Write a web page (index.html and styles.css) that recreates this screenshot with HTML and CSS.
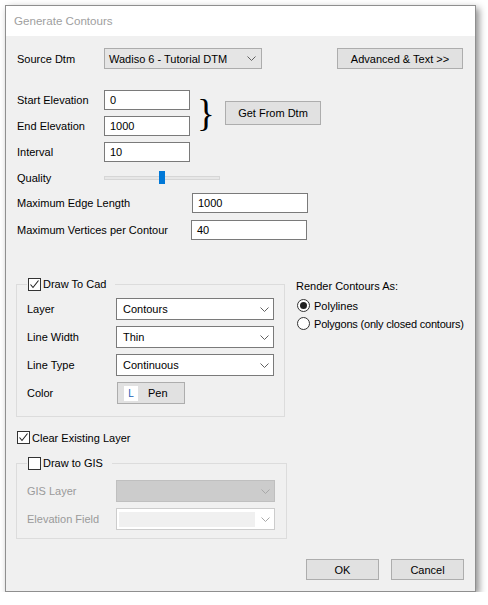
FILE: index.html
```html
<!DOCTYPE html>
<html>
<head>
<meta charset="utf-8">
<link rel="stylesheet" href="styles.css">
</head>
<body>
<div class="window">
  <div class="titlebar">Generate Contours</div>
  <div class="content">
    <div class="row row-source">
      <span class="label w87">Source Dtm</span>
      <div class="combo combo-dd w158"><span class="combo-text">Wadiso 6 - Tutorial DTM</span><svg class="chev" width="9" height="5" viewBox="0 0 9 5"><polyline points="0.5,0.5 4.5,4.5 8.5,0.5" fill="none" stroke="#606060" stroke-width="1"/></svg></div>
      <button class="btn btn-adv">Advanced &amp; Text &gt;&gt;</button>
    </div>

    <div class="elev">
      <div class="elev-fields">
        <div class="row field"><span class="label w87">Start Elevation</span><div class="input w86">0</div></div>
        <div class="row field"><span class="label w87">End Elevation</span><div class="input w86">1000</div></div>
      </div>
      <span class="brace">}</span>
      <button class="btn btn-get">Get From Dtm</button>
    </div>
    <div class="row field gap6"><span class="label w87">Interval</span><div class="input w86">10</div></div>
    <div class="row field gap6"><span class="label w87">Quality</span><div class="slider"><div class="track"></div><div class="thumb"></div></div></div>
    <div class="row field gap5"><span class="label w175">Maximum Edge Length</span><div class="input w116">1000</div></div>
    <div class="row field gap7"><span class="label w174">Maximum Vertices per Contour</span><div class="input w116">40</div></div>

    <div class="cad-section">
      <fieldset class="group group-cad">
        <legend class="legend"><span class="check checked"><svg width="11" height="11" viewBox="0 0 11 11"><polyline points="1.5,5.5 4,8.5 9.5,1.5" fill="none" stroke="#222" stroke-width="1.1"/></svg></span><span>Draw To Cad</span></legend>
        <div class="grow">
          <span class="label w89">Layer</span>
          <div class="combo combo-list w158"><span class="combo-text">Contours</span><svg class="chev" width="9" height="5" viewBox="0 0 9 5"><polyline points="0.5,0.5 4.5,4.5 8.5,0.5" fill="none" stroke="#606060" stroke-width="1"/></svg></div>
        </div>
        <div class="grow">
          <span class="label w89">Line Width</span>
          <div class="combo combo-list w158"><span class="combo-text">Thin</span><svg class="chev" width="9" height="5" viewBox="0 0 9 5"><polyline points="0.5,0.5 4.5,4.5 8.5,0.5" fill="none" stroke="#606060" stroke-width="1"/></svg></div>
        </div>
        <div class="grow">
          <span class="label w89">Line Type</span>
          <div class="combo combo-list w158"><span class="combo-text">Continuous</span><svg class="chev" width="9" height="5" viewBox="0 0 9 5"><polyline points="0.5,0.5 4.5,4.5 8.5,0.5" fill="none" stroke="#606060" stroke-width="1"/></svg></div>
        </div>
        <div class="grow">
          <span class="label w89">Color</span>
          <button class="btn btn-pen"><span class="pen-swatch">L</span><span>Pen</span></button>
        </div>
      </fieldset>
      <div class="render">
        <div class="render-title">Render Contours As:</div>
        <div class="radio-row"><span class="radio on"></span><span>Polylines</span></div>
        <div class="radio-row"><span class="radio"></span><span class="tight">Polygons (only closed contours)</span></div>
      </div>
    </div>

    <div class="clear-row"><span class="check checked"><svg width="11" height="11" viewBox="0 0 11 11"><polyline points="1.5,5.5 4,8.5 9.5,1.5" fill="none" stroke="#222" stroke-width="1.1"/></svg></span><span>Clear Existing Layer</span></div>

    <fieldset class="group group-gis">
      <legend class="legend"><span class="check"></span><span>Draw to GIS</span></legend>
      <div class="grow grow-gis">
        <span class="label w89 disabled">GIS Layer</span>
        <div class="combo combo-disabled w159"><span class="combo-text"></span><svg class="chev" width="9" height="5" viewBox="0 0 9 5"><polyline points="0.5,0.5 4.5,4.5 8.5,0.5" fill="none" stroke="#a8a8a8" stroke-width="1"/></svg></div>
      </div>
      <div class="grow grow-gis">
        <span class="label w89 disabled">Elevation Field</span>
        <div class="combo combo-edit w159"><span class="edit-inner"></span><svg class="chev" width="9" height="5" viewBox="0 0 9 5"><polyline points="0.5,0.5 4.5,4.5 8.5,0.5" fill="none" stroke="#a8a8a8" stroke-width="1"/></svg></div>
      </div>
    </fieldset>

    <div class="footer">
      <button class="btn btn-foot">OK</button>
      <button class="btn btn-foot">Cancel</button>
    </div>
  </div>
</div>
</body>
</html>
```

FILE: styles.css
```css
html, body {
  margin: 0;
  padding: 0;
  background: #ffffff;
}
body {
  font-family: "Liberation Sans", Arial, sans-serif;
  font-size: 11px;
  color: #000;
}
.window {
  margin: 5px 0 0 5px;
  width: 471px;
  height: 587px;
  box-sizing: border-box;
  border: 1px solid #8f8f8f;
  background: #f0f0f0;
  box-shadow: 3px 3px 7px rgba(0,0,0,0.45);
  display: flex;
  flex-direction: column;
}
.titlebar {
  height: 30px;
  line-height: 30px;
  background: #ffffff;
  color: #a0a0a0;
  font-size: 11.6px;
  padding-left: 8px;
}
.content {
  padding: 0 12px 0 11px;
  display: flex;
  flex-direction: column;
}
.row {
  display: flex;
  align-items: center;
}
.label {
  flex: none;
  white-space: nowrap;
}
.w87 { width: 87px; }
.w89 { width: 89px; }
.w174 { width: 174px; }
.w175 { width: 175px; }
.w86 { width: 86px; }
.w116 { width: 116px; }
.w158 { width: 158px; }
.w159 { width: 159px; }

.row-source {
  margin-top: 12px;
  height: 21px;
}
.btn {
  font-family: inherit;
  font-size: 11px;
  color: #000;
  background: #e1e1e1;
  border: 1px solid #adadad;
  box-sizing: border-box;
  padding: 0;
  margin: 0;
}
.btn-adv {
  margin-left: auto;
  width: 126px;
  height: 21px;
}
.combo {
  box-sizing: border-box;
  display: flex;
  align-items: center;
  justify-content: space-between;
  flex: none;
}
.combo-text {
  white-space: nowrap;
}
.combo-dd {
  height: 21px;
  background: #e5e5e5;
  border: 1px solid #acacac;
  padding: 0 5px 0 4px;
}
.combo-list {
  height: 22px;
  background: #ffffff;
  border: 1px solid #7a7a7a;
  padding: 0 4px 0 6px;
}
.combo-disabled {
  height: 22px;
  background: #cccccc;
  border: 1px solid #bfbfbf;
  padding: 0 4px 0 6px;
}
.combo-edit {
  height: 22px;
  background: #ffffff;
  border: 1px solid #cccccc;
  padding: 0 4px 0 2px;
}
.edit-inner {
  width: 136px;
  height: 15px;
  background: #f0f0f0;
}
.chev {
  flex: none;
  display: block;
}

.elev {
  margin-top: 21px;
  display: flex;
  align-items: center;
}
.elev-fields {
  display: flex;
  flex-direction: column;
  gap: 6px;
}
.field {
  height: 20px;
}
.gap5 { margin-top: 5px; }
.gap6 { margin-top: 6px; }
.gap7 { margin-top: 7px; }
.input {
  box-sizing: border-box;
  height: 20px;
  line-height: 18px;
  background: #ffffff;
  border: 1px solid #7a7a7a;
  padding-left: 5px;
  flex: none;
}
.brace {
  font-family: "Liberation Serif", "Times New Roman", serif;
  font-size: 37px;
  line-height: 40px;
  height: 40px;
  width: 10px;
  margin-left: 7px;
  margin-top: 2px;
  color: #000;
}
.btn-get {
  margin-left: 18px;
  width: 96px;
  height: 24px;
}
.slider {
  width: 116px;
  height: 20px;
  display: flex;
  align-items: center;
  position: relative;
}
.track {
  width: 100%;
  height: 4px;
  box-sizing: border-box;
  background: #e7e7e7;
  border: 1px solid #d6d6d6;
}
.thumb {
  position: absolute;
  left: 55px;
  top: 3px;
  width: 6px;
  height: 13px;
  background: #0078d7;
}

.cad-section {
  margin-top: 37px;
  margin-left: -1px;
  display: flex;
  align-items: flex-start;
}
.group {
  margin: 0;
  box-sizing: border-box;
  border: 1px solid #dcdcdc;
  min-width: 0;
}
.group-cad {
  flex: none;
  width: 269px;
  padding: 7px 10px 12px 10px;
  display: flex;
  flex-direction: column;
  gap: 6px;
}
.legend {
  padding: 0 9px 0 1px;
  display: flex;
  align-items: center;
  height: 14px;
  gap: 2px;
}
.check {
  box-sizing: border-box;
  width: 13px;
  height: 13px;
  border: 1px solid #333333;
  background: #ffffff;
  display: flex;
  align-items: center;
  justify-content: center;
  flex: none;
}
.check svg { display: block; }
.grow {
  display: flex;
  align-items: center;
  height: 22px;
}
.btn-pen {
  margin-left: 1px;
  width: 68px;
  height: 22px;
  display: flex;
  align-items: center;
  padding-left: 6px;
  gap: 10px;
}
.pen-swatch {
  width: 14px;
  height: 15px;
  background: #ffffff;
  color: #1a5fb4;
  display: flex;
  align-items: center;
  justify-content: center;
  font-size: 10px;
}
.render {
  flex: none;
  margin-left: 11px;
  padding-top: 2px;
  display: flex;
  flex-direction: column;
  white-space: nowrap;
}
.render-title {
  height: 14px;
  line-height: 14px;
  margin-bottom: 6px;
}
.radio-row {
  display: flex;
  align-items: center;
  height: 13px;
  gap: 4px;
  margin-bottom: 5px;
  margin-left: 1px;
}
.tight {
  letter-spacing: -0.2px;
}
.radio {
  box-sizing: border-box;
  flex: none;
  width: 13px;
  height: 13px;
  border: 1px solid #333333;
  border-radius: 50%;
  background: #ffffff;
  display: flex;
  align-items: center;
  justify-content: center;
}
.radio.on::after {
  content: "";
  width: 7px;
  height: 7px;
  border-radius: 50%;
  background: #222222;
}

.clear-row {
  margin-top: 14px;
  display: flex;
  align-items: center;
  height: 13px;
  gap: 2px;
}
.group-gis {
  margin-top: 12px;
  margin-left: -1px;
  width: 271px;
  padding: 10px 11px 8px 10px;
  display: flex;
  flex-direction: column;
  gap: 6px;
}
.grow-gis {
  height: 22px;
}
.disabled {
  color: #9a9a9a;
}
.footer {
  margin-top: 20px;
  margin-right: -1px;
  display: flex;
  justify-content: flex-end;
  gap: 12px;
}
.btn-foot {
  width: 73px;
  height: 21px;
}
```
